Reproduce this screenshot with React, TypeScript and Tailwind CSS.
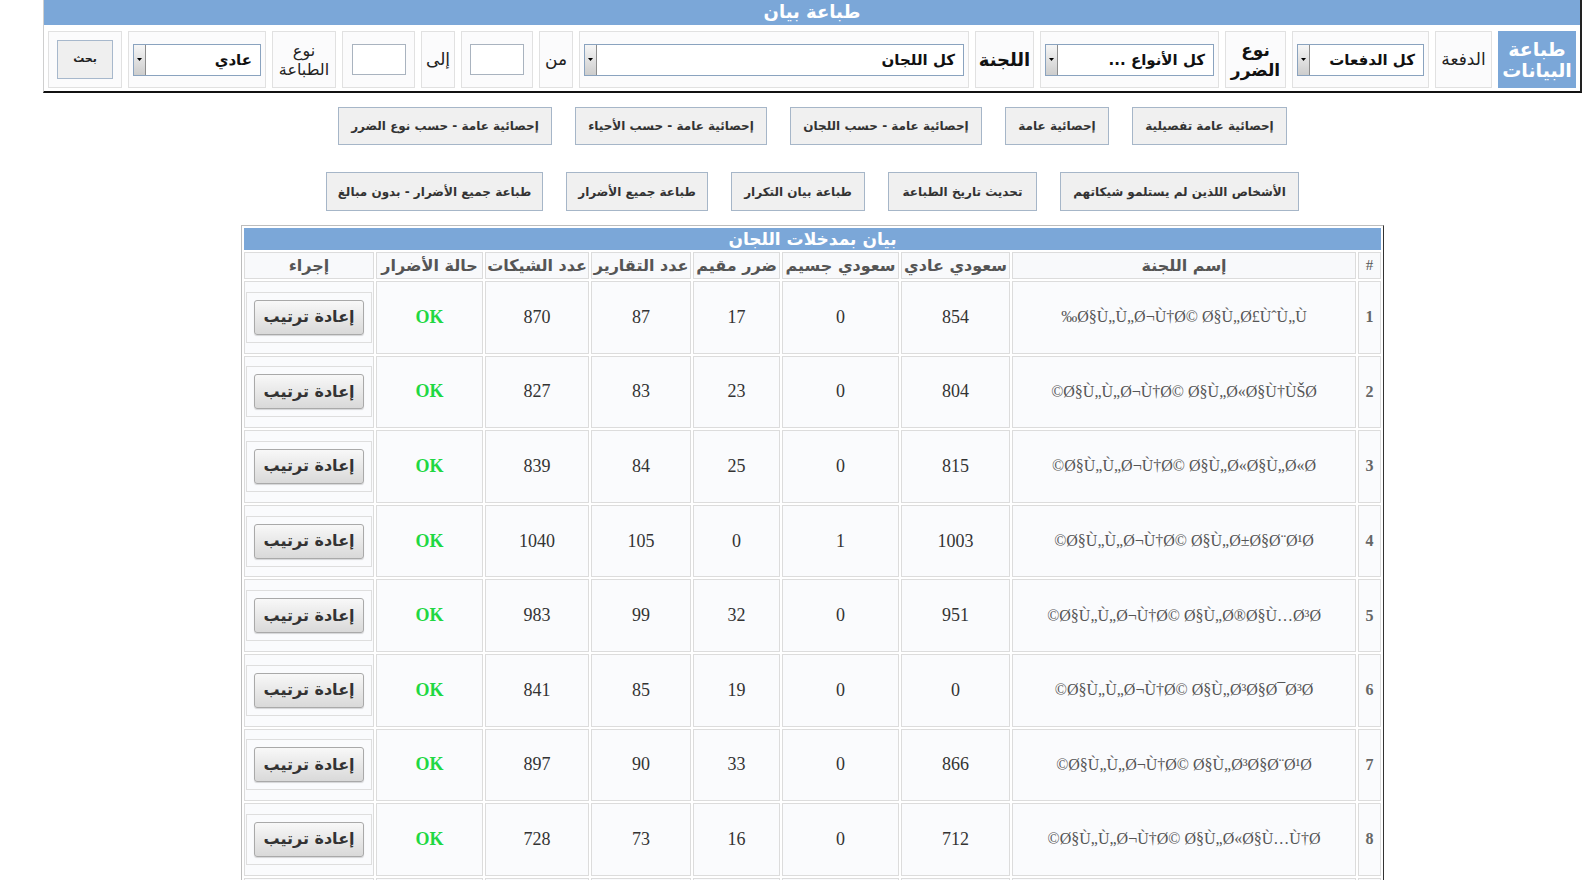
import React from "react";

const rows = [
  { id: 1, name: "Ø§Ù„Ù„Ø¬Ù†Ø© Ø§Ù„Ø£ÙˆÙ„Ù‰", normal: 854, severe: 0, resident: 17, reports: 87, cheques: 870 },
  { id: 2, name: "Ø§Ù„Ù„Ø¬Ù†Ø© Ø§Ù„Ø«Ø§Ù†ÙŠØ©", normal: 804, severe: 0, resident: 23, reports: 83, cheques: 827 },
  { id: 3, name: "Ø§Ù„Ù„Ø¬Ù†Ø© Ø§Ù„Ø«Ø§Ù„Ø«Ø©", normal: 815, severe: 0, resident: 25, reports: 84, cheques: 839 },
  { id: 4, name: "Ø§Ù„Ù„Ø¬Ù†Ø© Ø§Ù„Ø±Ø§Ø¨Ø¹Ø©", normal: 1003, severe: 1, resident: 0, reports: 105, cheques: 1040 },
  { id: 5, name: "Ø§Ù„Ù„Ø¬Ù†Ø© Ø§Ù„Ø®Ø§Ù…Ø³Ø©", normal: 951, severe: 0, resident: 32, reports: 99, cheques: 983 },
  { id: 6, name: "Ø§Ù„Ù„Ø¬Ù†Ø© Ø§Ù„Ø³Ø§Ø¯Ø³Ø©", normal: 0, severe: 0, resident: 19, reports: 85, cheques: 841 },
  { id: 7, name: "Ø§Ù„Ù„Ø¬Ù†Ø© Ø§Ù„Ø³Ø§Ø¨Ø¹Ø©", normal: 866, severe: 0, resident: 33, reports: 90, cheques: 897 },
  { id: 8, name: "Ø§Ù„Ù„Ø¬Ù†Ø© Ø§Ù„Ø«Ø§Ù…Ù†Ø©", normal: 712, severe: 0, resident: 16, reports: 73, cheques: 728 },
];

const statButtons = [
  { label: "إحصائية عامة تفصيلية", w: "w-[155px]" },
  { label: "إحصائية عامة", w: "w-[104px]" },
  { label: "إحصائية عامة - حسب اللجان", w: "w-[192px]" },
  { label: "إحصائية عامة - حسب الأحياء", w: "w-[192px]" },
  { label: "إحصائية عامة - حسب نوع الضرر", w: "w-[214px]" },
];

const printButtons = [
  { label: "الأشخاص اللذين لم يستلمو شيكاتهم", w: "w-[239px]" },
  { label: "تحديث تاريخ الطباعة", w: "w-[149px]" },
  { label: "طباعة بيان التكرار", w: "w-[134px]" },
  { label: "طباعة جميع الأضرار", w: "w-[142px]" },
  { label: "طباعة جميع الأضرار - بدون مبالغ", w: "w-[217px]" },
];

function FakeSelect({ label }: { label: string }) {
  return (
    <div className="flex h-[32px] w-full items-stretch border border-[#8aa3bf] bg-white">
      <span className="flex-1 truncate pr-[8px] text-right text-[15px] font-bold leading-[30px] text-[#111]">
        {label}
      </span>
      <span className="flex w-[12px] items-center justify-center border-r border-[#8c8c8c] bg-linear-to-b from-[#f6f6f6] to-[#cdcdcd]">
        <svg width="5" height="3" viewBox="0 0 5 3">
          <path d="M0 0h5L2.5 3z" fill="#000" />
        </svg>
      </span>
    </div>
  );
}

function Cell({ w, children, className = "" }: { w: string; children: React.ReactNode; className?: string }) {
  return (
    <div className={`flex h-[57px] shrink-0 items-center justify-center border border-[#e1e1e1] bg-[#fbfbfc] ${w} ${className}`}>
      {children}
    </div>
  );
}

const td = "border border-[#dcdcdc] bg-[#fafbfd] p-0";

export default function App() {
  const serif = "font-['Liberation_Serif',serif]";

  return (
    <div dir="rtl" className="h-[880px] overflow-hidden bg-white font-['DejaVu_Sans',sans-serif]">
      <div className="ml-[43px] mr-[2px]">
        {/* filter panel */}
        <div className="border-b-2 border-l border-r-2 border-b-[#111] border-l-[#cfcfcf] border-r-[#222] bg-white">
          <div className="h-[25px] bg-[#7ba7d8] text-center text-[18px] font-bold leading-[23px] text-white">
            طباعة بيان
          </div>
          <div className="flex gap-[6px] pb-[3px] pl-[4px] pr-[4px] pt-[6px]">
            <div className="flex h-[57px] w-[78px] shrink-0 items-center justify-center bg-[#7ba7d8] text-center text-[19px] font-bold leading-[21px] text-white">
              طباعة
              <br />
              البيانات
            </div>
            <Cell w="w-[57px]">
              <span className="text-[17px] text-[#222]">الدفعة</span>
            </Cell>
            <Cell w="w-[137px]" className="px-[4px]">
              <FakeSelect label="كل الدفعات" />
            </Cell>
            <Cell w="w-[61px]">
              <span className="text-center text-[17px] font-bold leading-[20px] text-[#111]">
                نوع
                <br />
                الضرر
              </span>
            </Cell>
            <Cell w="w-[179px]" className="px-[4px]">
              <FakeSelect label="كل الأنواع ..." />
            </Cell>
            <Cell w="w-[59px]">
              <span className="text-[18px] font-bold text-[#111]">اللجنة</span>
            </Cell>
            <Cell w="flex-1" className="px-[4px]">
              <FakeSelect label="كل اللجان" />
            </Cell>
            <Cell w="w-[34px]">
              <span className="text-[17px] text-[#222]">من</span>
            </Cell>
            <Cell w="w-[72px]">
              <input className="h-[31px] w-[54px] border border-[#a9b3bf] bg-white" />
            </Cell>
            <Cell w="w-[34px]">
              <span className="text-[17px] text-[#222]">إلى</span>
            </Cell>
            <Cell w="w-[73px]">
              <input className="h-[31px] w-[54px] border border-[#a9b3bf] bg-white" />
            </Cell>
            <Cell w="w-[64px]">
              <span className="text-center text-[16px] leading-[19px] text-[#222]">
                نوع
                <br />
                الطباعة
              </span>
            </Cell>
            <Cell w="w-[138px]" className="px-[4px]">
              <FakeSelect label="عادي" />
            </Cell>
            <Cell w="w-[74px]">
              <button className="h-[39px] w-[56px] border border-[#a7b8cc] bg-[#efefef] text-[11px] font-bold text-[#222]">
                بحث
              </button>
            </Cell>
          </div>
        </div>

        {/* action buttons */}
        <div className="mt-[14px] flex flex-col items-center gap-[27px]">
          <div className="flex gap-[23px]">
            {statButtons.map((b) => (
              <button
                key={b.label}
                className={`h-[38px] ${b.w} border border-[#a6b6c8] bg-[#f0f0f0] text-[12px] font-bold text-[#333]`}
              >
                {b.label}
              </button>
            ))}
          </div>
          <div className="flex gap-[23px]">
            {printButtons.map((b) => (
              <button
                key={b.label}
                className={`h-[39px] ${b.w} border border-[#a6b6c8] bg-[#f0f0f0] text-[12px] font-bold text-[#333]`}
              >
                {b.label}
              </button>
            ))}
          </div>
        </div>

        {/* committees table */}
        <table className="mx-auto mt-[14px] w-[1143px] table-fixed border-separate border-spacing-[2px] border border-[#bdbdbd] border-r-[#333] bg-white">
          <colgroup>
            <col className="w-[23px]" />
            <col className="w-[344px]" />
            <col className="w-[109px]" />
            <col className="w-[117px]" />
            <col className="w-[87px]" />
            <col className="w-[100px]" />
            <col className="w-[104px]" />
            <col className="w-[107px]" />
            <col className="w-[130px]" />
          </colgroup>
          <thead>
            <tr>
              <th
                colSpan={9}
                className="h-[22px] bg-[#7ba7d8] p-0 text-center text-[17px] font-bold leading-[22px] text-white"
              >
                بيان بمدخلات اللجان
              </th>
            </tr>
            <tr className="text-[16px] font-bold text-[#555]">
              <th className={`h-[27px] border border-[#dcdcdc] bg-[#f8f9fb] p-0 text-[15px] font-normal ${serif}`}>#</th>
              <th className="border border-[#dcdcdc] bg-[#f8f9fb] p-0">إسم اللجنة</th>
              <th className="border border-[#dcdcdc] bg-[#f8f9fb] p-0">سعودي عادي</th>
              <th className="border border-[#dcdcdc] bg-[#f8f9fb] p-0">سعودي جسيم</th>
              <th className="border border-[#dcdcdc] bg-[#f8f9fb] p-0">ضرر مقيم</th>
              <th className="border border-[#dcdcdc] bg-[#f8f9fb] p-0">عدد التقارير</th>
              <th className="border border-[#dcdcdc] bg-[#f8f9fb] p-0">عدد الشيكات</th>
              <th className="border border-[#dcdcdc] bg-[#f8f9fb] p-0">حالة الأضرار</th>
              <th className="border border-[#dcdcdc] bg-[#f8f9fb] p-0">إجراء</th>
            </tr>
          </thead>
          <tbody className={`${serif} text-center`}>
            {rows.map((r) => (
              <tr key={r.id} className="h-[72.6px]">
                <td className={`${td} text-[16px] font-bold text-[#666]`}>{r.id}</td>
                <td className={`${td} whitespace-nowrap text-[16px] text-[#555]`}>{r.name}</td>
                <td className={`${td} text-[18px] text-[#333]`}>{r.normal}</td>
                <td className={`${td} text-[18px] text-[#333]`}>{r.severe}</td>
                <td className={`${td} text-[18px] text-[#333]`}>{r.resident}</td>
                <td className={`${td} text-[18px] text-[#333]`}>{r.reports}</td>
                <td className={`${td} text-[18px] text-[#333]`}>{r.cheques}</td>
                <td className={`${td} text-[18px] font-bold text-[#1fd843]`}>OK</td>
                <td className={td}>
                  <div className="mx-[1px] border border-[#dedede] p-[7px]">
                    <button className="h-[35px] w-full rounded-[3px] border border-[#a9a9a9] bg-linear-to-b from-[#f8f8f8] to-[#d9d9d9] font-['DejaVu_Sans',sans-serif] text-[16px] font-bold text-[#333] shadow-[0_1px_1px_rgba(0,0,0,0.15)]">
                      إعادة ترتيب
                    </button>
                  </div>
                </td>
              </tr>
            ))}
            {/* next row, only its top shows in the viewport */}
            <tr className="h-[72.6px]">
              {Array.from({ length: 9 }).map((_, i) => (
                <td key={i} className={td} />
              ))}
            </tr>
          </tbody>
        </table>
      </div>
    </div>
  );
}
